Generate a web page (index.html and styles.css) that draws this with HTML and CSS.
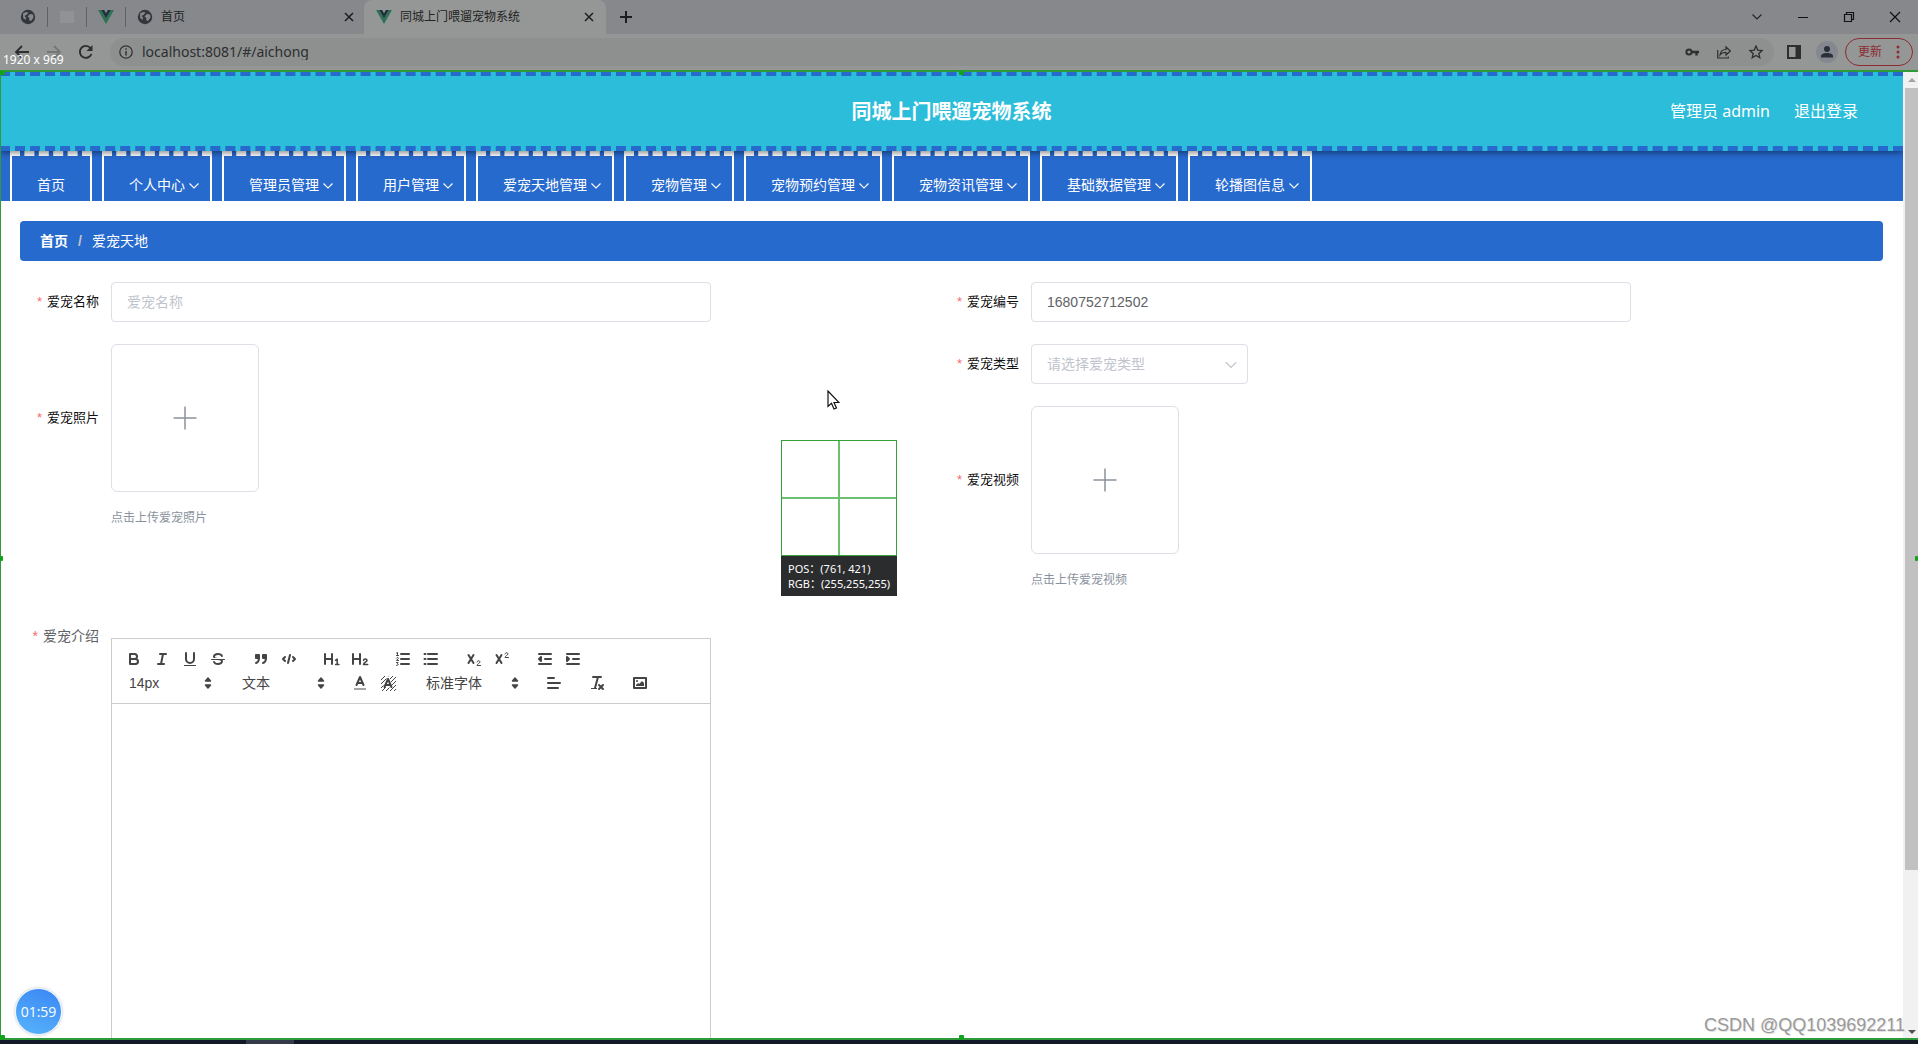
FILE: index.html
```html
<!DOCTYPE html>
<html lang="zh-CN">
<head>
<meta charset="utf-8">
<title>同城上门喂遛宠物系统</title>
<link rel="stylesheet" href="styles.css">
</head>
<body>
<svg class="defs" aria-hidden="true">
  <symbol id="globe" viewBox="0 0 16 16"><circle cx="8" cy="8" r="7.2" fill="#33363a"/><path d="M3 4.5 6 3l2.500.5L7 5.500 4.500 7 6 8.500 5.500 11 3.200 9zM10 5l3 .5.500 3-2.500 3.500-2-1 .5-2-2-1.500z" fill="#87898c"/></symbol>
  <symbol id="vue" viewBox="0 0 16 16"><path d="M0 1h3.200L8 9.200 12.800 1H16L8 15z" fill="#2c7355"/><path d="M3.200 1h3L8 4.200 9.800 1h3L8 9.200z" fill="#20303d"/></symbol>
  <symbol id="close" viewBox="0 0 10 10"><path d="M1 1l8 8M9 1L1 9" stroke="#1c1d1f" stroke-width="1.500"/></symbol>
  <symbol id="chev" viewBox="0 0 12 12"><path d="M1.500 3.500 6 8l4.500-4.500" fill="none" stroke="currentColor" stroke-width="1.100"/></symbol>
  <symbol id="updown" viewBox="0 0 18 18"><path d="M6.500 7 9 4l2.500 3zM6.500 11l2.500 3 2.500-3z" fill="#444" stroke="#444" stroke-width="1.500" stroke-linejoin="round"/></symbol>
  <symbol id="plus" viewBox="0 0 24 24"><path d="M12 .5v23M.5 12h23" stroke="#8c939d" stroke-width="1.500"/></symbol>
</svg>

<div class="chrome">
  <div class="tabs">
    <button class="pin" aria-label="固定标签"><svg class="i16"><use href="#globe"/></svg></button>
    <button class="pin" aria-label="空白"><span class="blank"></span></button>
    <button class="pin" aria-label="Vue"><svg class="i16"><use href="#vue"/></svg></button>
    <div class="tab">
      <svg class="i16"><use href="#globe"/></svg><span>首页</span>
      <button aria-label="关闭标签"><svg class="i10"><use href="#close"/></svg></button>
    </div>
    <div class="tab active">
      <svg class="i16"><use href="#vue"/></svg><span>同城上门喂遛宠物系统</span>
      <button aria-label="关闭标签"><svg class="i10"><use href="#close"/></svg></button>
    </div>
    <button class="newtab" aria-label="新标签"><svg class="i14" viewBox="0 0 14 14"><path d="M7 1v12M1 7h12" stroke="#1c1d1f" stroke-width="2"/></svg></button>
    <div class="window">
      <button aria-label="搜索标签"><svg class="i12"><use href="#chev"/></svg></button>
      <button aria-label="最小化"><svg class="i12" viewBox="0 0 12 12"><path d="M1 6.500h10" stroke="#111"/></svg></button>
      <button aria-label="还原"><svg class="i12" viewBox="0 0 12 12"><path d="M1.500 3.500h7v7h-7zM3.500 3.500v-2h7v7h-2" fill="none" stroke="#111" stroke-width="1.200"/></svg></button>
      <button aria-label="关闭"><svg class="i12" viewBox="0 0 12 12"><path d="M1 1l10 10M11 1L1 11" stroke="#111" stroke-width="1.200"/></svg></button>
    </div>
  </div>
  <div class="bar">
    <div class="history">
      <button aria-label="后退"><svg class="i16" viewBox="0 0 16 16"><path d="M15 8H2M8 2 2 8l6 6" fill="none" stroke="#2c2e30" stroke-width="1.800"/></svg></button>
      <button aria-label="前进"><svg class="i16" viewBox="0 0 16 16"><path d="M1 8h13M8 2l6 6-6 6" fill="none" stroke="#757776" stroke-width="1.800"/></svg></button>
      <button aria-label="刷新"><svg class="i16" viewBox="0 0 16 16"><path d="M13.500 10A6 6 0 1 1 12.500 4" fill="none" stroke="#2c2e30" stroke-width="1.900"/><path d="M14.500 1v6h-6z" fill="#2c2e30"/></svg></button>
    </div>
    <div class="omnibox">
      <svg class="i14" viewBox="0 0 14 14"><circle cx="7" cy="7" r="6.200" fill="none" stroke="#333" stroke-width="1.300"/><path d="M7 6v4.500M7 3.200v1.500" stroke="#333" stroke-width="1.500"/></svg>
      <input class="url" aria-label="地址" value="localhost:8081/#/aichong">
      <button aria-label="密码"><svg class="i14" viewBox="0 0 14 14"><circle cx="4" cy="7" r="2.600" fill="none" stroke="#2c2e30" stroke-width="2"/><path d="M6.500 7H14M11.500 7v3.500" stroke="#2c2e30" stroke-width="2.400"/></svg></button>
      <button aria-label="分享"><svg class="i14" viewBox="0 0 14 14"><path d="M.7 5v8h10.600v-1.500M3 10c.5-4 3-5.500 6-5.500V2l4.300 4L9 10V7.500C6.500 7.300 4.500 8 3 10z" fill="none" stroke="#2c2e30" stroke-width="1.200"/></svg></button>
      <button aria-label="收藏"><svg class="i14" viewBox="0 0 14 14"><path d="M7 1l1.700 4.100 4.500.4-3.400 2.900 1 4.300L7 10.400l-3.800 2.300 1-4.300L.8 5.500l4.500-.4z" fill="none" stroke="#2c2e30" stroke-width="1.300"/></svg></button>
    </div>
    <div class="tools">
      <button aria-label="侧边栏"><svg class="i14" viewBox="0 0 14 14"><path d="M1 1h12v12H1z" fill="none" stroke="#2c2e30" stroke-width="2"/><path d="M8.500 1H13v12H8.500z" fill="#2c2e30"/></svg></button>
      <button class="avatar" aria-label="用户"><svg class="i14" viewBox="0 0 14 14"><circle cx="7" cy="4" r="3" fill="#2a2f38"/><path d="M1 12.500V11c0-2 3-3 6-3s6 1 6 3v1.500z" fill="#2a2f38"/></svg></button>
      <button class="update">更新<svg class="dots" viewBox="0 0 4 14"><circle cx="2" cy="2" r="1.500"/><circle cx="2" cy="7" r="1.500"/><circle cx="2" cy="12" r="1.500"/></svg></button>
    </div>
  </div>
</div>

<div class="viewport">
  <div class="page">
    <header class="header">
      <span></span>
      <h1>同城上门喂遛宠物系统</h1>
      <div class="user"><span>管理员 admin</span><a href="#">退出登录</a></div>
    </header>
    <nav class="nav">
      <a href="#">首页</a>
      <a href="#">个人中心<svg><use href="#chev"/></svg></a>
      <a href="#">管理员管理<svg><use href="#chev"/></svg></a>
      <a href="#">用户管理<svg><use href="#chev"/></svg></a>
      <a href="#">爱宠天地管理<svg><use href="#chev"/></svg></a>
      <a href="#">宠物管理<svg><use href="#chev"/></svg></a>
      <a href="#">宠物预约管理<svg><use href="#chev"/></svg></a>
      <a href="#">宠物资讯管理<svg><use href="#chev"/></svg></a>
      <a href="#">基础数据管理<svg><use href="#chev"/></svg></a>
      <a href="#">轮播图信息<svg><use href="#chev"/></svg></a>
    </nav>
    <main class="main">
      <div class="crumbs"><a href="#">首页</a><i>/</i><span>爱宠天地</span></div>
      <form class="form">
        <div class="col">
          <div class="field"><label for="name">爱宠名称</label><input id="name" placeholder="爱宠名称"></div>
          <div class="field"><label for="photo">爱宠照片</label><button type="button" class="upload" id="photo"><svg><use href="#plus"/></svg></button></div>
          <p class="tip">点击上传爱宠照片</p>
        </div>
        <div class="col">
          <div class="field"><label for="number">爱宠编号</label><input id="number" value="1680752712502"></div>
          <div class="field"><label for="kind">爱宠类型</label><div class="select"><select id="kind"><option>请选择爱宠类型</option></select><svg><use href="#chev"/></svg></div></div>
          <div class="field"><label for="video">爱宠视频</label><button type="button" class="upload" id="video"><svg><use href="#plus"/></svg></button></div>
          <p class="tip">点击上传爱宠视频</p>
        </div>
        <div class="field intro">
          <label for="intro">爱宠介绍</label>
          <div class="editor">
            <div class="toolbar">
              <div class="group">
                <button type="button" aria-label="粗体"><svg viewBox="0 0 18 18"><path class="s" d="M5 4h4.500a2.500 2.500 0 0 1 0 5H5zM5 9h5.500a2.500 2.500 0 0 1 0 5H5z"/></svg></button>
                <button type="button" aria-label="斜体"><svg viewBox="0 0 18 18"><path class="s" d="M7 4h6M5 14h6M8 14l2-10"/></svg></button>
                <button type="button" aria-label="下划线"><svg viewBox="0 0 18 18"><path class="s" d="M5 3v6a4 4 0 0 0 8 0V3"/><path class="f" d="M3 15h12v1H3z"/></svg></button>
                <button type="button" aria-label="删除线"><svg viewBox="0 0 18 18"><path class="s t" d="M2.500 9.500h13"/><path class="f" d="M9.007 8C6.542 7.791 6 7.519 6 6.500 6 5.792 7.283 5 9 5c1.571 0 2.765.679 2.969 1.309a1 1 0 0 0 1.900-.617C13.356 4.106 11.354 3 9 3 6.200 3 4 4.538 4 6.500A3.200 3.200 0 0 0 4.500 8zM8.984 10C11.457 10.208 12 10.479 12 11.500c0 .708-1.283 1.500-3 1.500-1.571 0-2.765-.679-2.969-1.309a1 1 0 1 0-1.900.617C4.644 13.894 6.646 15 9 15c2.800 0 5-1.538 5-3.500a3.200 3.200 0 0 0-.5-1.500z"/></svg></button>
              </div>
              <div class="group">
                <button type="button" aria-label="引用"><svg viewBox="0 0 18 18"><path class="f s" d="M4 5h3v3H4zM11 5h3v3h-3z"/><path class="s" d="M7 8c0 4.031-3 5-3 5M14 8c0 4.031-3 5-3 5"/></svg></button>
                <button type="button" aria-label="代码"><svg viewBox="0 0 18 18"><path class="s" d="M5 7 3 9l2 2M13 7l2 2-2 2M10 5 8 13"/></svg></button>
              </div>
              <div class="group">
                <button type="button" aria-label="标题一"><svg viewBox="0 0 18 18"><path class="f" d="M10 4v10a1 1 0 0 1-2 0v-4H3v4a1 1 0 0 1-2 0V4a1 1 0 0 1 2 0v4h5V4a1 1 0 0 1 2 0z"/><path class="s u" d="M12.500 10.300l1.700-1.200v5.300M12.600 14.400h3.300"/></svg></button>
                <button type="button" aria-label="标题二"><svg viewBox="0 0 18 18"><path class="f" d="M10 4v10a1 1 0 0 1-2 0v-4H3v4a1 1 0 0 1-2 0V4a1 1 0 0 1 2 0v4h5V4a1 1 0 0 1 2 0z"/><path class="s u" d="M12.500 10.400c.3-2 3.500-2 3.500 0 0 1.500-3.500 2.200-3.500 4h4.200"/></svg></button>
              </div>
              <div class="group">
                <button type="button" aria-label="有序列表"><svg viewBox="0 0 18 18"><path class="s" d="M7 4h8M7 9h8M7 14h8"/><path class="s t" d="M2.500 5.500h2M3.500 5.500v-3l-1 .5M2.500 8c.5-1 2-.6 1.800.3L2.500 10.500h2M2.500 12.500h1.600l-.8 1.300c1.500 0 1.200 1.700-.8 1.600"/></svg></button>
                <button type="button" aria-label="无序列表"><svg viewBox="0 0 18 18"><path class="s" d="M6 4h9M6 9h9M6 14h9M2.500 4h1M2.500 9h1M2.500 14h1"/></svg></button>
              </div>
              <div class="group">
                <button type="button" aria-label="下标"><svg viewBox="0 0 18 18"><path class="s" d="M3.500 5l5 8M8.500 5l-5 8"/><path class="s t" d="M12 12c.2-1.700 3-1.700 3 0 0 1-3 2-3 3.500h3.500"/></svg></button>
                <button type="button" aria-label="上标"><svg viewBox="0 0 18 18"><path class="s" d="M3.500 5l5 8M8.500 5l-5 8"/><path class="s t" d="M12 4c.2-1.700 3-1.700 3 0 0 1-3 2-3 3.500h3.500"/></svg></button>
              </div>
              <div class="group">
                <button type="button" aria-label="减少缩进"><svg viewBox="0 0 18 18"><path class="s" d="M3 14h12M3 4h12M9 9h6"/><path class="s f" d="M5 7v4L3 9z"/></svg></button>
                <button type="button" aria-label="增加缩进"><svg viewBox="0 0 18 18"><path class="s" d="M3 14h12M3 4h12M9 9h6"/><path class="s f" d="M3 7v4l2-2z"/></svg></button>
              </div>
            </div>
            <div class="toolbar second">
              <div class="group picker"><select aria-label="字号"><option>14px</option></select><svg><use href="#updown"/></svg></div>
              <div class="group picker"><select aria-label="段落"><option>文本</option></select><svg><use href="#updown"/></svg></div>
              <div class="group">
                <button type="button" aria-label="文字颜色"><svg viewBox="0 0 18 18"><path class="s" d="M5.500 11 9 3l3.500 8M11.600 9H6.400"/><path d="M3 15h12" stroke="#888" stroke-width="1.500"/></svg></button>
                <button type="button" aria-label="背景颜色"><svg viewBox="0 0 18 18"><path d="M2 6l4-4M2 10l8-8M2 14 14 2M3 17 17 3M7 17 17 7M11 17l6-6M15 17l2-2" stroke="#444" stroke-width="1"/><path d="M6 13 9 6l3 7" stroke="#fff" stroke-width="4" fill="none"/><path class="s" d="M5.500 13 9 5l3.500 8M11.600 11H6.400"/></svg></button>
              </div>
              <div class="group picker wide"><select aria-label="字体"><option>标准字体</option></select><svg><use href="#updown"/></svg></div>
              <div class="group"><button type="button" aria-label="对齐"><svg viewBox="0 0 18 18"><path class="s" d="M3 9h12M3 14h10M3 4h6"/></svg></button></div>
              <div class="group"><button type="button" aria-label="清除格式"><svg viewBox="0 0 18 18"><path class="s" d="M5 3h8M7 14 10 3M11 11l4 4M15 11l-4 4"/><path class="f" d="M3 14h6v1H3z"/></svg></button></div>
              <div class="group"><button type="button" aria-label="图片"><svg viewBox="0 0 18 18"><path class="s" d="M3 4h12v10H3z"/><circle class="f" cx="6" cy="7" r="1"/><path class="f" d="M5 12v-1l2-2 1 1 3-3 2 2v3z"/></svg></button></div>
            </div>
            <textarea id="intro"></textarea>
          </div>
        </div>
      </form>
    </main>
  </div>
  <div class="scroll"><i class="up"></i><div class="thumb"></div><i class="down"></i></div>
  <div class="frame"></div>
  <i class="handle tl"></i><i class="handle tc"></i><i class="handle ml"></i><i class="handle mr"></i><i class="handle bl"></i><i class="handle bc"></i>
</div>
<div class="taskbar"><span></span></div>

<div class="size">1920 x 969</div>
<svg class="cursor" viewBox="0 0 13 20"><path d="M1 1v15.500l3.500-3.200 2.500 5.700 2.500-1-2.500-5.500h5z" fill="#fff" stroke="#111" stroke-width="1.200"/></svg>
<div class="probe">
  <div class="lens"></div>
  <div class="readout">POS：(761, 421)<br>RGB：(255,255,255)</div>
</div>
<div class="timer">01:59</div>
<div class="mark">CSDN @QQ1039692211</div>
</body>
</html>
```
FILE: styles.css
```css
* { box-sizing: border-box; }
body {
  margin: 0; height: 100vh; overflow: hidden; position: relative;
  display: flex; flex-direction: column;
  font: 14px/20px "Liberation Sans", "Noto Sans CJK SC", sans-serif;
  background: #fff; color: #111;
}
button { border: 0; padding: 0; background: none; font: inherit; color: inherit; display: flex; align-items: center; justify-content: center; }
input, select, textarea { font: inherit; color: inherit; border: 0; outline: 0; background: none; }
a { color: inherit; text-decoration: none; }
svg { flex: none; }
.defs { position: absolute; width: 0; height: 0; }
.i10 { width: 10px; height: 10px; }
.i12 { width: 12px; height: 12px; }
.i14 { width: 14px; height: 14px; }
.i16 { width: 16px; height: 16px; }

/* browser chrome */
.chrome { flex: none; background: #959796; font: 12px/16px "Noto Sans", "Noto Sans CJK SC", sans-serif; color: #222; }
.tabs { height: 34px; display: flex; align-items: center; background: #86888c; padding-left: 9px; }
.pin { width: 39px; height: 20px; border-right: 1px solid #5f6165; }
.blank { width: 14px; height: 12px; background: #909294; }
.tab { width: 238px; height: 34px; display: flex; align-items: center; gap: 8px; padding: 0 10px 0 11px; }
.tab span { flex: 1; }
.tab.active { width: 242px; background: #959796; border-radius: 8px 8px 0 0; padding: 0 12px; }
.newtab { width: 40px; }
.window { margin-left: auto; display: flex; }
.window button { width: 46px; height: 28px; }
.bar { height: 36px; display: flex; align-items: center; }
.history { display: flex; padding-left: 6px; width: 110px; }
.history button { width: 32px; }
.omnibox { flex: 1; height: 28px; display: flex; align-items: center; border-radius: 14px; background: #8e908f; padding: 0 2px 0 9px; }
.url { flex: 1; min-width: 0; padding: 0 9px; font-size: 14px; color: #2c2e30; }
.omnibox button { width: 32px; }
.tools { display: flex; align-items: center; padding-right: 5px; }
.tools button { width: 32px; }
.tools button:first-child { width: 40px; }
.tools .avatar { width: 22px; height: 22px; border-radius: 50%; background: #858890; margin: 0 7px 0 2px; }
.tools .update { width: 68px; height: 28px; border: 1px solid #8c2b31; border-radius: 14px; color: #8c2b31; gap: 14px; }
.dots { width: 4px; height: 14px; fill: #8c2b31; }

/* captured region */
.viewport { flex: 1; min-height: 0; display: flex; position: relative; border-top: 1px solid #2f9b38; overflow: hidden; }
.page { flex: 1; min-width: 0; overflow: hidden; }
.header {
  position: relative; z-index: 1; height: 80px; padding-right: 45px;
  display: grid; grid-template-columns: 1fr auto 1fr; align-items: center;
  background: #2bbdda; color: #fff;
  border-top: 5px dashed #276ace; border-bottom: 5px dashed #276ace;
  box-shadow: 0 2px 6px rgba(0, 0, 0, .45);
}
.header h1 { margin: 0 0 0 45px; font: bold 20px/28px "Noto Sans CJK SC", sans-serif; }
.user { display: flex; justify-content: flex-end; gap: 24px; font: 16px/24px "Noto Sans", "Noto Sans CJK SC", sans-serif; }
.nav { display: flex; gap: 10px; height: 50px; padding-left: 10px; background: #276ace; color: #fff; }
.nav a { position: relative; padding: 19px 25px 0; border: 2px solid #fff; border-top: 5px dashed #fff; border-bottom: 0; white-space: nowrap; }
.nav svg { position: absolute; right: 10px; top: 24px; width: 12px; height: 12px; }
.main { padding: 20px; }
.crumbs { display: flex; align-items: center; gap: 10px; height: 40px; padding: 0 20px; border-radius: 4px; background: #276ace; color: #fff; }
.crumbs a { font-weight: bold; }
.crumbs i { color: #c0c4cc; font-style: normal; font-weight: bold; }

/* form */
.form { display: grid; grid-template-columns: 1fr 1fr; padding: 21px 23px 0 0; }
.col { display: flex; flex-direction: column; gap: 22px; min-height: 356px; }
.field { display: flex; align-items: center; }
.field label { width: 91px; padding-right: 12px; text-align: right; font-size: 13px; white-space: nowrap; }
.field label::before { content: "*"; color: #f56c6c; margin-right: 5px; }
.field input { width: 600px; height: 40px; padding: 0 15px; border: 1px solid #dcdfe6; border-radius: 4px; color: #606266; }
.field input::placeholder { color: #c0c4cc; opacity: 1; }
.select { position: relative; width: 217px; }
.select select { width: 100%; height: 40px; padding: 0 15px; appearance: none; border: 1px solid #dcdfe6; border-radius: 4px; color: #c0c4cc; }
.select svg { position: absolute; right: 10px; top: 14px; width: 14px; height: 14px; color: #c0c4cc; pointer-events: none; }
.upload { width: 148px; height: 148px; border: 1px solid #dcdfe6; border-radius: 6px; }
.upload svg { width: 24px; height: 24px; }
.tip { margin: -6px 0 0 91px; font-size: 12px; color: #8a929e; }
.intro { grid-column: 1 / -1; align-items: flex-start; }
.intro label { font-size: 14px; color: #606266; margin-top: -12px; }
.editor { width: 600px; border: 1px solid #ccc; }
.toolbar { display: flex; gap: 15px; padding: 8px 8px 0; }
.toolbar.second { padding: 0 8px 8px; border-bottom: 1px solid #ccc; }
.group { display: flex; height: 24px; }
.group button { width: 28px; height: 24px; }
.group button svg { width: 18px; height: 18px; }
.picker { position: relative; width: 98px; color: #444; }
.picker.wide { width: 108px; }
.picker select { width: 100%; padding: 0 9px; appearance: none; }
.picker svg { position: absolute; right: 1px; top: 3px; width: 18px; height: 18px; pointer-events: none; }
.s { fill: none; stroke: #444; stroke-width: 2; stroke-linecap: round; stroke-linejoin: round; }
.s.t { stroke-width: 1; }
.s.u { stroke-width: 1.5; }
.f { fill: #444; }
.editor textarea { display: block; width: 100%; height: 400px; resize: none; padding: 12px 15px; }

/* scrollbar */
.scroll { width: 15px; flex: none; display: flex; flex-direction: column; align-items: stretch; background: #f1f1f1; padding-left: 2px; }
.scroll i { height: 17px; display: flex; align-items: center; justify-content: center; }
.scroll i::before { content: ""; border: 4px solid transparent; }
.scroll .up::before { border-bottom-color: #a3a3a3; border-top: 0; }
.scroll .down::before { border-top-color: #505050; border-bottom: 0; }
.scroll .thumb { flex: 0 0 auto; height: 80.7%; background: #c1c1c1; }
.scroll .down { margin-top: auto; }

/* capture overlay */
.frame { position: absolute; z-index: 2; inset: -1px 0 0; border: 2px solid #2f9b38; border-left-width: 1px; border-right: 0; pointer-events: none; }
.handle { position: absolute; z-index: 2; width: 5px; height: 5px; background: #12a31c; border-radius: 1px; }
.tl { left: 0; top: -1px; }
.tc { left: 50%; top: -1px; }
.ml { left: 0; top: 50%; width: 3px; }
.mr { right: 0; top: 50%; width: 3px; }
.bl { left: 0; bottom: 0; }
.bc { left: 50%; bottom: 0; }
.taskbar { flex: none; height: 4px; background: #111a26; padding-left: 246px; }
.taskbar span { display: block; width: 48px; height: 4px; background: #343a47; }
.size { position: absolute; left: 3px; top: 52px; font: 12px/16px "Noto Sans", sans-serif; color: #fff; }
.cursor { position: absolute; left: 827px; top: 390px; width: 13px; height: 20px; }
.probe { position: absolute; left: 781px; top: 440px; width: 116px; }
.lens { height: 116px; border: 1px solid #35a03a; background: linear-gradient(#6cc06f, #6cc06f) center / 2px 100% no-repeat, linear-gradient(#6cc06f, #6cc06f) center / 100% 2px no-repeat; }
.readout { height: 40px; padding: 5px 7px; background: #2b2c2e; color: #fff; font: 11px/15px "Noto Sans", "Noto Sans CJK SC", sans-serif; white-space: nowrap; }
.timer { position: absolute; left: 15px; top: 988px; width: 47px; height: 47px; border: 1px solid #e8f3ff; border-radius: 50%; background: linear-gradient(200deg, #3a86f5, #58b4fb); box-shadow: 0 0 3px rgba(0, 0, 0, .25); color: #fff; font: 14px/45px "Open Sans", sans-serif; text-align: center; }
.mark { position: absolute; right: 13px; bottom: 9px; font-size: 18px; color: #999; text-shadow: 1px 1px 0 #e4e4e4; }
```
